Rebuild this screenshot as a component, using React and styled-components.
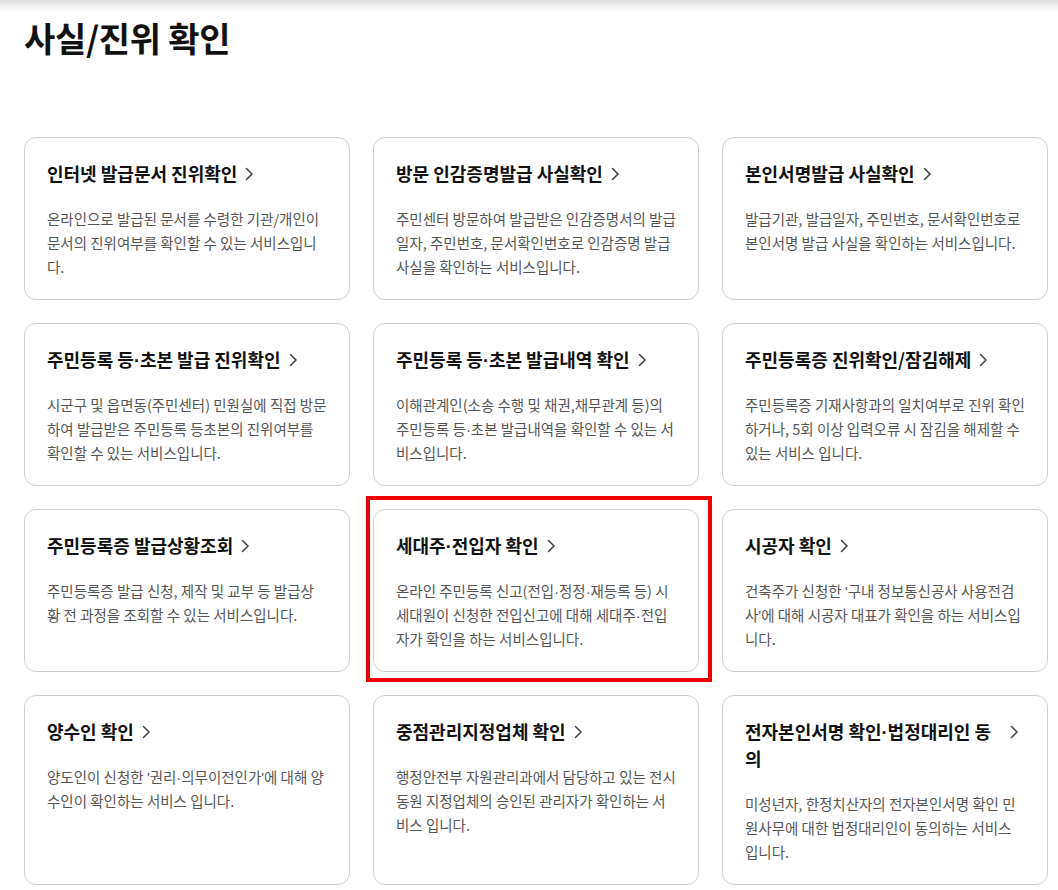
import React from "react";
import styled, { createGlobalStyle } from "styled-components";

const GlobalStyle = createGlobalStyle`
  html, body { margin: 0; padding: 0; background: #fff; }
  body {
    font-family: "Noto Sans CJK KR", "Noto Sans", sans-serif;
    color: #111;
  }
  * { box-sizing: border-box; }
`;

const Page = styled.div`
  width: 1058px;
  min-height: 890px;
  background: #fff;
`;

const TopShade = styled.div`
  height: 12px;
  background: linear-gradient(to bottom, #d9d9d9 0%, #ececec 40%, #ffffff 100%);
`;

const Content = styled.main`
  padding: 3px 10px 0 24px;
`;

const Heading = styled.h1`
  margin: 0;
  font-size: 34px;
  font-weight: 700;
  line-height: 46px;
  letter-spacing: -0.3px;
  color: #111;
`;

const Grid = styled.div`
  margin-top: 76px;
  display: grid;
  grid-template-columns: repeat(3, 326px);
  column-gap: 23px;
  row-gap: 23px;
`;

const CardWrap = styled.div`
  position: relative;
`;

const Highlight = styled.div`
  position: absolute;
  left: -7px;
  top: -13px;
  right: -13px;
  bottom: -10px;
  border: 4px solid #f00000;
  pointer-events: none;
`;

const Card = styled.a`
  display: block;
  height: 100%;
  padding: 22px 22px 20px 22px;
  border: 1px solid #cfcfcf;
  border-radius: 12px;
  background: #fff;
  text-decoration: none;
  color: inherit;
`;

const TitleRow = styled.div`
  display: flex;
  align-items: flex-start;
  gap: 8px;
  padding-right: 6px;
`;

const Title = styled.span`
  font-size: 18px;
  font-weight: 700;
  line-height: 27px;
  letter-spacing: 0;
  color: #111;
`;

const Chevron = styled.svg`
  flex: none;
  width: 9px;
  height: 14px;
  margin-top: 7px;
`;

const Desc = styled.p`
  margin: 20px 0 0;
  font-size: 14.5px;
  line-height: 24px;
  letter-spacing: 0;
  color: #555;
  word-break: normal;
  overflow-wrap: anywhere;
`;

const Dot = styled.span`
  font-family: "Liberation Sans", sans-serif;
  line-height: 1;
`;

const items = [
  { t: "인터넷 발급문서 진위확인", d: "온라인으로 발급된 문서를 수령한 기관/개인이 문서의 진위여부를 확인할 수 있는 서비스입니다." },
  { t: "방문 인감증명발급 사실확인", d: "주민센터 방문하여 발급받은 인감증명서의 발급일자, 주민번호, 문서확인번호로 인감증명 발급 사실을 확인하는 서비스입니다." },
  { t: "본인서명발급 사실확인", d: "발급기관, 발급일자, 주민번호, 문서확인번호로 본인서명 발급 사실을 확인하는 서비스입니다." },
  { t: "주민등록 등·초본 발급 진위확인", d: "시군구 및 읍면동(주민센터) 민원실에 직접 방문하여 발급받은 주민등록 등초본의 진위여부를 확인할 수 있는 서비스입니다." },
  { t: "주민등록 등·초본 발급내역 확인", d: "이해관계인(소송 수행 및 채권,채무관계 등)의 주민등록 등·초본 발급내역을 확인할 수 있는 서비스입니다." },
  { t: "주민등록증 진위확인/잠김해제", d: "주민등록증 기재사항과의 일치여부로 진위 확인하거나, 5회 이상 입력오류 시 잠김을 해제할 수 있는 서비스 입니다." },
  { t: "주민등록증 발급상황조회", d: "주민등록증 발급 신청, 제작 및 교부 등 발급상황 전 과정을 조회할 수 있는 서비스입니다." },
  { t: "세대주·전입자 확인", d: "온라인 주민등록 신고(전입·정정·재등록 등) 시 세대원이 신청한 전입신고에 대해 세대주·전입자가 확인을 하는 서비스입니다.", selected: true },
  { t: "시공자 확인", d: "건축주가 신청한 '구내 정보통신공사 사용전검사'에 대해 시공자 대표가 확인을 하는 서비스입니다." },
  { t: "양수인 확인", d: "양도인이 신청한 '권리·의무이전인가'에 대해 양수인이 확인하는 서비스 입니다." },
  { t: "중점관리지정업체 확인", d: "행정안전부 자원관리과에서 담당하고 있는 전시동원 지정업체의 승인된 관리자가 확인하는 서비스 입니다." },
  { t: "전자본인서명 확인·법정대리인 동의", d: "미성년자, 한정치산자의 전자본인서명 확인 민원사무에 대한 법정대리인이 동의하는 서비스 입니다." },
];

const withDots = (text) => {
  const parts = text.split(/([·'])/);
  return parts.map((p, i) =>
    p === "·" || p === "'" ? <Dot key={i}>{p}</Dot> : <React.Fragment key={i}>{p}</React.Fragment>
  );
};

const ChevronIcon = () => (
  <Chevron viewBox="0 0 9 14" fill="none">
    <path d="M1.5 1.5 L7 7 L1.5 12.5" stroke="#444" strokeWidth="1.6" strokeLinecap="round" strokeLinejoin="round" />
  </Chevron>
);

export default function App() {
  return (
    <Page>
      <GlobalStyle />
      <TopShade />
      <Content>
        <Heading>사실/진위 확인</Heading>
        <Grid>
          {items.map((it, i) => (
            <CardWrap key={i}>
              <Card href="#">
                <TitleRow>
                  <Title>{withDots(it.t)}</Title>
                  <ChevronIcon />
                </TitleRow>
                <Desc>{withDots(it.d)}</Desc>
              </Card>
              {it.selected && <Highlight />}
            </CardWrap>
          ))}
        </Grid>
      </Content>
    </Page>
  );
}
